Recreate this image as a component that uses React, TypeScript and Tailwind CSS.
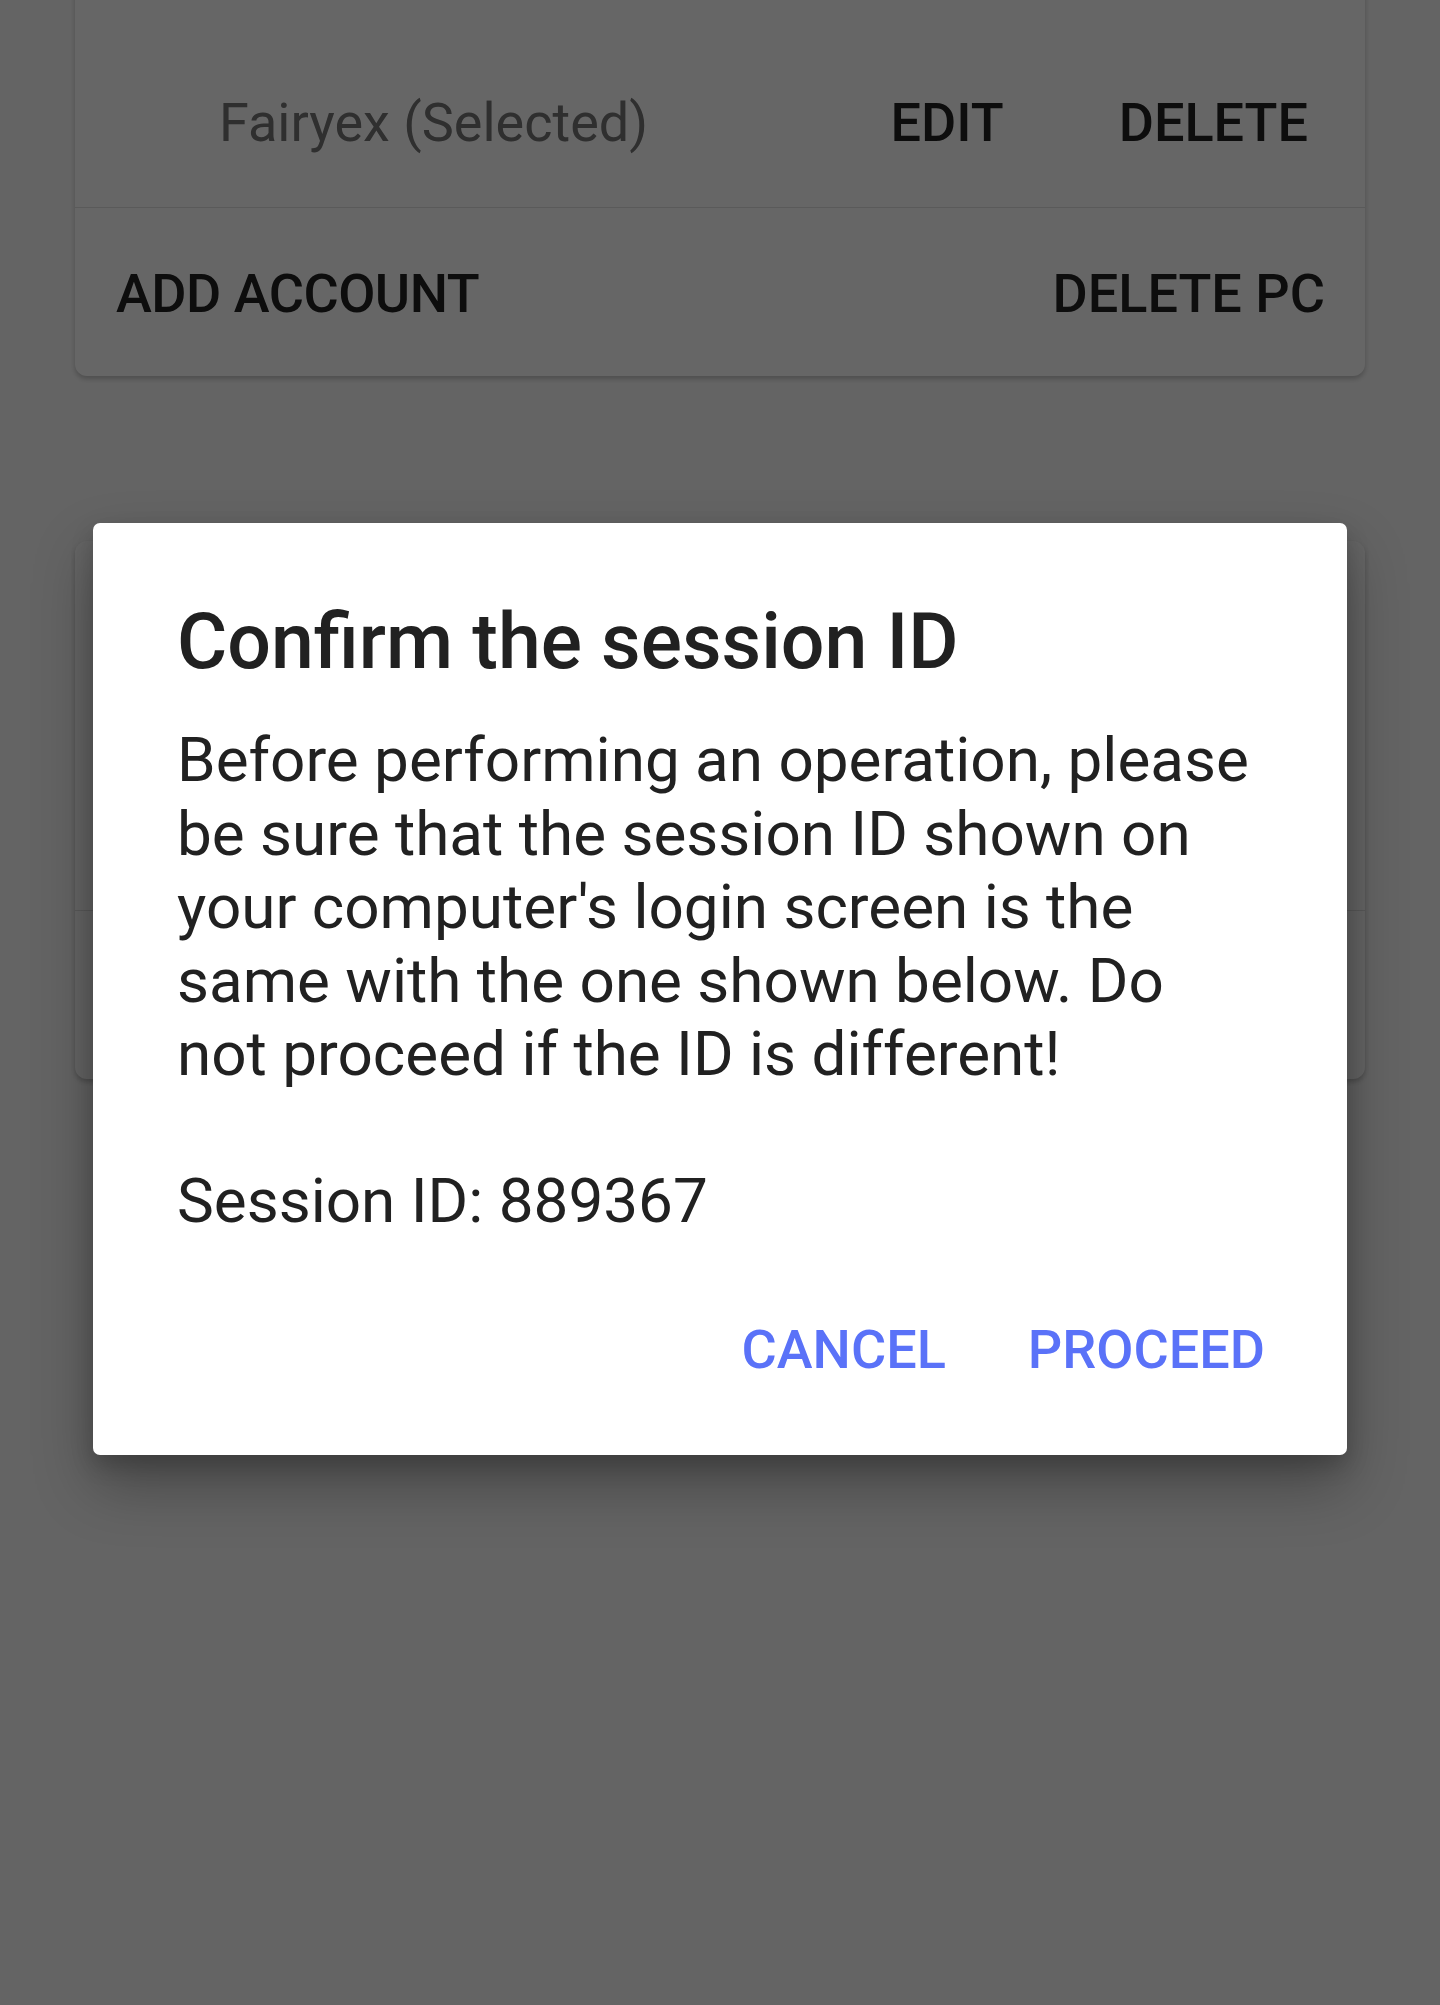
import React from 'react';

const App = () => {
  return (
    <div className="relative h-[2005px] w-full overflow-hidden bg-[#fafafa] font-['Roboto',sans-serif]">
      {/* Account card */}
      <div className="mx-[75px] -mt-[20px] rounded-[12px] bg-white shadow-[0_3px_5px_rgba(0,0,0,0.22)]">
        <div className="flex h-[227px] items-start pt-[111px] pr-[57px]">
          <span className="ml-[144px] text-[54px] leading-[64px] text-[#757575]">Fairyex (Selected)</span>
          <span className="ml-auto text-[54px] font-medium leading-[64px] text-[#212121]">EDIT</span>
          <span className="ml-[115px] text-[54px] font-medium leading-[64px] text-[#212121]">DELETE</span>
        </div>
        <div className="h-px bg-[#e0e0e0]" />
        <div className="flex h-[168px] items-start justify-between pt-[54px] pl-[41px] pr-[40px]">
          <span className="text-[54px] font-medium leading-[64px] tracking-[-0.5px] text-[#212121]">ADD ACCOUNT</span>
          <span className="text-[54px] font-medium leading-[64px] text-[#212121]">DELETE PC</span>
        </div>
      </div>

      {/* Second card (behind dialog) */}
      <div className="mx-[75px] mt-[165px] rounded-[12px] bg-white shadow-[0_3px_5px_rgba(0,0,0,0.22)]">
        <div className="h-[369px]" />
        <div className="h-px bg-[#e0e0e0]" />
        <div className="h-[168px]" />
      </div>

      {/* Scrim + dialog */}
      <div className="absolute inset-0 bg-black/60">
        <div className="mx-[93px] mt-[523px] rounded-[7px] bg-white pt-[74px] pb-[73px] shadow-[0_30px_60px_rgba(0,0,0,0.3),0_10px_22px_rgba(0,0,0,0.18)]">
          <div className="px-[84px]">
            <h2 className="text-[77px] font-medium leading-[90px] text-[#212121]">Confirm the session ID</h2>
            <p className="mt-[36px] whitespace-nowrap text-[62px] leading-[73.5px] text-[#212121]">
              Before performing an operation, please
              <br />
              be sure that the session ID shown on
              <br />
              your computer's login screen is the
              <br />
              same with the one shown below. Do
              <br />
              not proceed if the ID is different!
            </p>
            <p className="mt-[73.5px] text-[62px] leading-[73.5px] text-[#212121]">Session ID: 889367</p>
          </div>
          <div className="mt-[80px] flex justify-end gap-[82px] pr-[82px]">
            <span className="text-[54px] font-medium leading-[64.5px] text-[#5a72f8]">CANCEL</span>
            <span className="text-[54px] font-medium leading-[64.5px] text-[#5a72f8]">PROCEED</span>
          </div>
        </div>
      </div>
    </div>
  );
};

export default App;
